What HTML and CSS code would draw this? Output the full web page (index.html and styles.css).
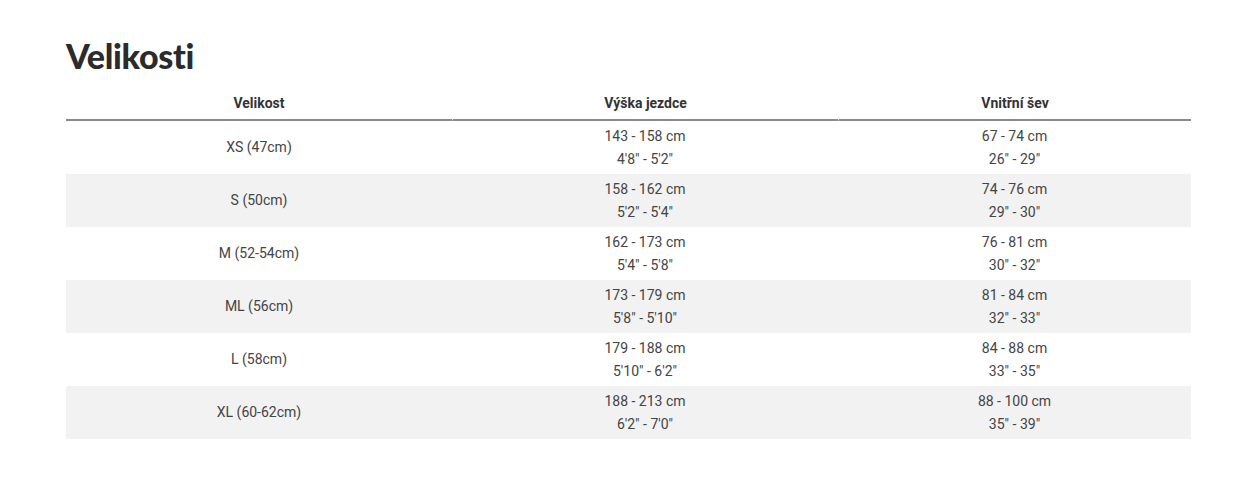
FILE: index.html
```html
<!DOCTYPE html>
<html lang="cs">
<head>
<meta charset="utf-8">
<link rel="stylesheet" href="styles.css">
</head>
<body>
<div class="wrap">
  <h2 class="title">Velikosti</h2>
  <table class="sizes">
    <colgroup><col class="c1"><col class="c2"><col class="c3"></colgroup>
    <thead>
      <tr><th>Velikost</th><th>Výška jezdce</th><th>Vnitřní šev</th></tr>
    </thead>
    <tbody>
      <tr><td>XS (47cm)</td><td>143 - 158 cm<br>4'8" - 5'2"</td><td>67 - 74 cm<br>26" - 29"</td></tr>
      <tr><td>S (50cm)</td><td>158 - 162 cm<br>5'2" - 5'4"</td><td>74 - 76 cm<br>29" - 30"</td></tr>
      <tr><td>M (52-54cm)</td><td>162 - 173 cm<br>5'4" - 5'8"</td><td>76 - 81 cm<br>30" - 32"</td></tr>
      <tr><td>ML (56cm)</td><td>173 - 179 cm<br>5'8" - 5'10"</td><td>81 - 84 cm<br>32" - 33"</td></tr>
      <tr><td>L (58cm)</td><td>179 - 188 cm<br>5'10" - 6'2"</td><td>84 - 88 cm<br>33" - 35"</td></tr>
      <tr><td>XL (60-62cm)</td><td>188 - 213 cm<br>6'2" - 7'0"</td><td>88 - 100 cm<br>35" - 39"</td></tr>
    </tbody>
  </table>
</div>
</body>
</html>
```
FILE: styles.css
```css
html, body { margin: 0; padding: 0; background: #fff; }
body { font-family: Roboto, "Liberation Sans", sans-serif; color: #333; }
.wrap { padding: 36px 0 0 66px; width: 1125px; }
.title {
  margin: 0 0 14px 0;
  font-family: Lato, "Liberation Sans", sans-serif;
  font-weight: 900;
  font-size: 34px;
  line-height: 40px;
  color: #2b2b2b;
  letter-spacing: -0.3px;
}
.sizes { width: 1125px; border-collapse: separate; border-spacing: 0; table-layout: fixed; }
.c1 { width: 386px; }
.c2 { width: 386px; }
.c3 { width: 353px; }
.sizes th {
  font-family: Roboto, sans-serif;
  font-size: 14px;
  font-weight: 700;
  color: #333;
  height: 25px;
  padding: 0 0 4px 0;
  vertical-align: middle;
  border-bottom: 2px solid #8a8a8a;
  text-align: center;
}
.sizes th + th { border-left: 1px solid #fff; }
.sizes td {
  font-size: 14px;
  line-height: 23px;
  color: #444;
  text-align: center;
  height: 53px;
  padding: 0;
  vertical-align: middle;
}
.sizes tbody tr:nth-child(even) td { background: #f2f2f2; }
```
